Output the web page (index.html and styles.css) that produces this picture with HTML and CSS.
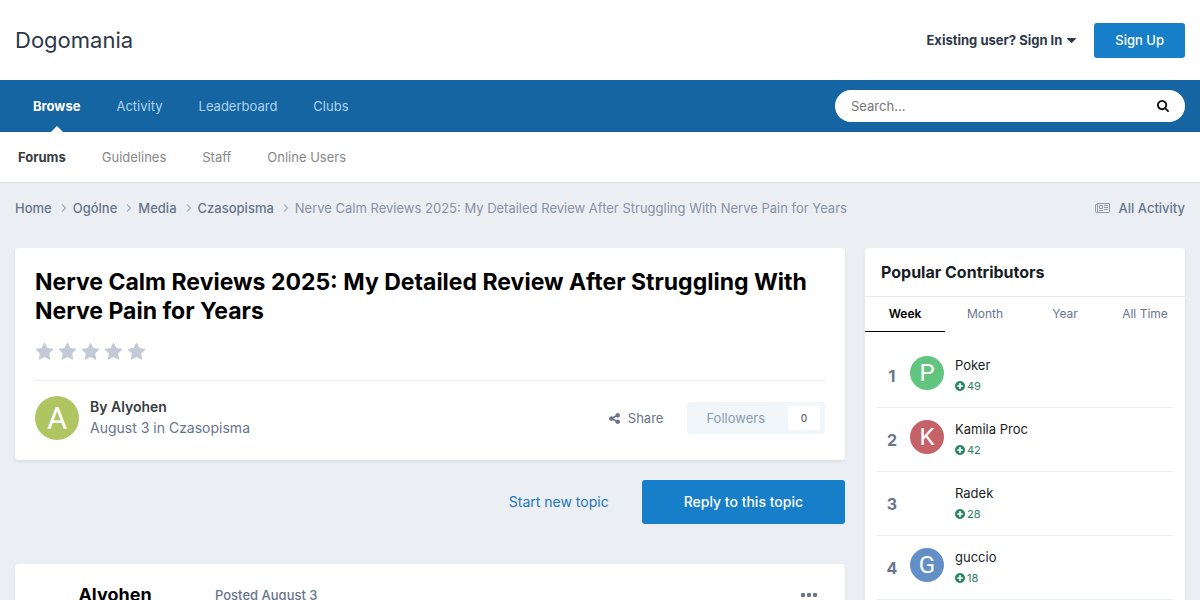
FILE: index.html
```html
<!DOCTYPE html>
<html lang="en">
<head>
    <meta charset="UTF-8">
    <meta name="viewport" content="width=device-width, initial-scale=1.0">
    <title>Nerve Calm Reviews 2025 - Dogomania</title>
    <link rel="stylesheet" href="styles.css">
</head>
<body>
    <!-- Shared icons -->
    <svg class="sprite" aria-hidden="true">
        <symbol id="star" viewBox="0 0 1792 1792"><path d="M1728 647q0 22-26 48l-363 354 86 500q1 7 1 20 0 21-10.5 35.5t-30.5 14.5q-19 0-40-12l-449-236-449 236q-22 12-40 12-21 0-31.5-14.5t-10.5-35.5q0-6 2-20l86-500-364-354q-25-27-25-48 0-37 56-46l502-73 225-455q19-41 49-41t49 41l225 455 502 73q56 9 56 46z"/></symbol>
        <symbol id="plus" viewBox="128 128 1536 1536"><path d="M1344 960v-128q0-26-19-45t-45-19h-256v-256q0-26-19-45t-45-19h-128q-26 0-45 19t-19 45v256h-256q-26 0-45 19t-19 45v128q0 26 19 45t45 19h256v256q0 26 19 45t45 19h128q26 0 45-19t19-45v-256h256q26 0 45-19t19-45zm320-64q0 209-103 385.5t-279.5 279.5-385.5 103-385.5-103-279.5-279.5-103-385.5 103-385.5 279.5-279.5 385.5-103 385.5 103 279.5 279.5 103 385.5z"/></symbol>
        <symbol id="angle" viewBox="0 0 6 8"><path d="M1 0.5 L4.5 4 L1 7.5" fill="none" stroke="currentColor" stroke-width="1.3"/></symbol>
    </svg>

    <header class="header">
        <a class="logo" href="#">Dogomania</a>
        <div class="user-links">
            <a class="sign-in" href="#">Existing user? Sign In
                <svg class="caret" viewBox="384 640 1024 576"><path d="M1408 704q0 26-19 45l-448 448q-19 19-45 19t-45-19l-448-448q-19-19-19-45t19-45 45-19h896q26 0 45 19t19 45z"/></svg>
            </a>
            <a class="sign-up" href="#">Sign Up</a>
        </div>
    </header>

    <nav class="main-nav">
        <ul class="nav-list">
            <li class="active"><a href="#">Browse</a></li>
            <li><a href="#">Activity</a></li>
            <li><a href="#">Leaderboard</a></li>
            <li><a href="#">Clubs</a></li>
        </ul>
        <form class="search">
            <input type="search" placeholder="Search..." aria-label="Search">
            <button type="button" aria-label="Search">
                <svg viewBox="64 128 1664 1664"><path d="M1216 832q0-185-131.5-316.5t-316.5-131.5-316.5 131.5-131.5 316.5 131.5 316.5 316.5 131.5 316.5-131.5 131.5-316.5zm512 832q0 52-38 90t-90 38q-54 0-90-38l-343-342q-179 124-399 124-143 0-273.5-55.5t-225-150-150-225-55.5-273.5 55.5-273.5 150-225 225-150 273.5-55.5 273.5 55.5 225 150 150 225 55.5 273.5q0 220-124 399l343 343q37 37 37 90z"/></svg>
            </button>
        </form>
    </nav>

    <nav class="sub-nav">
        <ul class="nav-list">
            <li class="active"><a href="#">Forums</a></li>
            <li><a href="#">Guidelines</a></li>
            <li><a href="#">Staff</a></li>
            <li><a href="#">Online Users</a></li>
        </ul>
    </nav>

    <nav class="breadcrumb">
        <ul>
            <li><a href="#">Home</a><svg><use href="#angle"/></svg></li>
            <li><a href="#">Ogólne</a><svg><use href="#angle"/></svg></li>
            <li><a href="#">Media</a><svg><use href="#angle"/></svg></li>
            <li><a href="#">Czasopisma</a><svg><use href="#angle"/></svg></li>
            <li class="current">Nerve Calm Reviews 2025: My Detailed Review After Struggling With Nerve Pain for Years</li>
        </ul>
        <a class="all-activity" href="#">
            <svg viewBox="0 0 15 10"><g fill="none" stroke="currentColor"><path d="M2.5 0.5H14.5V8.5Q14.5 9.5 13.5 9.5H1.5Q0.5 9.5 0.5 8.5V1.5H2.5"/><path d="M2.5 0.5V8.5Q2.5 9.5 1.5 9.5"/><path d="M4.5 2.5H7.5V5.5H4.5Z M9 2.5H13 M9 4.5H13 M9 6.5H13 M4 7.5H8"/></g></svg>
            All Activity
        </a>
    </nav>

    <div class="layout">
        <main>
            <section class="box topic">
                <h1>Nerve Calm Reviews 2025: My Detailed Review After Struggling With Nerve Pain for Years</h1>
                <div class="stars">
                    <svg><use href="#star"/></svg>
                    <svg><use href="#star"/></svg>
                    <svg><use href="#star"/></svg>
                    <svg><use href="#star"/></svg>
                    <svg><use href="#star"/></svg>
                </div>
                <div class="topic-info">
                    <span class="avatar avatar-large green">A</span>
                    <div class="author">
                        <strong>By <a href="#">Alyohen</a></strong>
                        <p>August 3 in <a href="#">Czasopisma</a></p>
                    </div>
                    <a class="share" href="#">
                        <svg viewBox="128 128 1536 1536"><path d="M1344 1024q133 0 226.5 93.5t93.5 226.5-93.5 226.5-226.5 93.5-226.5-93.5-93.5-226.5q0-12 2-34l-360-180q-92 86-218 86-133 0-226.5-93.5t-93.5-226.5 93.5-226.5 226.5-93.5q126 0 218 86l360-180q-2-22-2-34 0-133 93.5-226.5t226.5-93.5 226.5 93.5 93.5 226.5-93.5 226.5-226.5 93.5q-126 0-218-86l-360 180q2 22 2 34t-2 34l360 180q92-86 218-86z"/></svg>
                        Share
                    </a>
                    <a class="followers" href="#">Followers <span>0</span></a>
                </div>
            </section>

            <div class="actions">
                <a class="start-topic" href="#">Start new topic</a>
                <a class="reply" href="#">Reply to this topic</a>
            </div>

            <article class="box post">
                <h3><a href="#">Alyohen</a></h3>
                <a class="posted" href="#">Posted August 3</a>
                <button type="button" aria-label="More options">
                    <svg viewBox="0 0 16 4"><rect width="4" height="4" rx="1"/><rect x="6" width="4" height="4" rx="1"/><rect x="12" width="4" height="4" rx="1"/></svg>
                </button>
            </article>
        </main>

        <aside class="box">
            <h2>Popular Contributors</h2>
            <div class="tabs">
                <a class="active" href="#">Week</a>
                <a href="#">Month</a>
                <a href="#">Year</a>
                <a href="#">All Time</a>
            </div>
            <ol class="contributors">
                <li>
                    <span class="rank">1</span>
                    <span class="avatar mint">P</span>
                    <div><a href="#">Poker</a><p><svg><use href="#plus"/></svg>49</p></div>
                </li>
                <li>
                    <span class="rank">2</span>
                    <span class="avatar red">K</span>
                    <div><a href="#">Kamila Proc</a><p><svg><use href="#plus"/></svg>42</p></div>
                </li>
                <li>
                    <span class="rank">3</span>
                    <span class="avatar"></span>
                    <div><a href="#">Radek</a><p><svg><use href="#plus"/></svg>28</p></div>
                </li>
                <li>
                    <span class="rank">4</span>
                    <span class="avatar blue">G</span>
                    <div><a href="#">guccio</a><p><svg><use href="#plus"/></svg>18</p></div>
                </li>
            </ol>
        </aside>
    </div>
</body>
</html>
```

FILE: styles.css
```css
* {
    box-sizing: border-box;
}
body {
    font-family: Inter, "Liberation Sans", sans-serif;
    font-size: 13px;
    line-height: 18px;
    color: #353c41;
    background-color: #ebeff4;
    margin: 0;
}
a {
    color: inherit;
    text-decoration: none;
}
ul, ol, p, h1, h2, h3 {
    margin: 0;
    padding: 0;
    list-style: none;
}
svg {
    fill: currentColor;
    flex: none;
}
.sprite {
    display: none;
}

/* Header */
.header {
    display: flex;
    justify-content: space-between;
    align-items: center;
    height: 80px;
    padding: 0 15px;
    background: #fff;
    color: #2d3748;
}
.logo {
    font-size: 22px;
    line-height: 32px;
}
.user-links {
    display: flex;
    align-items: center;
    gap: 18px;
}
.sign-in {
    display: flex;
    align-items: center;
    gap: 5px;
    font-weight: 700;
}
.caret {
    width: 9px;
    height: 5px;
}
.sign-up {
    padding: 0 21px;
    line-height: 35px;
    font-weight: 500;
    color: #fff;
    background: #177ec9;
    border-radius: 3px;
}

/* Navigation */
.nav-list {
    display: flex;
}
.nav-list a {
    display: block;
    padding: 0 18px;
}
.nav-list .active a {
    font-weight: 700;
}
.main-nav {
    display: flex;
    justify-content: space-between;
    align-items: center;
    padding: 0 15px;
    background: #1465a1;
    color: #b1d3ee;
}
.main-nav .nav-list a {
    line-height: 52px;
}
.main-nav .active {
    position: relative;
    color: #fff;
}
.main-nav .active::after {
    content: "";
    position: absolute;
    bottom: 0;
    left: 50%;
    margin-left: -6px;
    border: 6px solid transparent;
    border-top: 0;
    border-bottom-color: #fff;
}
.search {
    display: flex;
    align-items: center;
    width: 350px;
    height: 32px;
    padding: 0 16px;
    background: #fff;
    border-radius: 16px;
}
.search input {
    flex: 1;
    min-width: 0;
    padding: 0;
    border: 0;
    outline: 0;
    background: none;
    font: inherit;
}
.search input::placeholder {
    color: #757575;
}
.search button {
    display: flex;
    padding: 0;
    border: 0;
    background: none;
    color: #111;
}
.search svg {
    width: 12px;
    height: 12px;
}
.sub-nav {
    background: #fff;
    color: #888;
    border-bottom: 1px solid #d9dde4;
}
.sub-nav .nav-list a {
    line-height: 50px;
}
.sub-nav .active {
    color: #353c41;
}

/* Breadcrumb */
.breadcrumb {
    display: flex;
    justify-content: space-between;
    padding: 16px 15px 31px;
    font-weight: 500;
    color: #68758d;
}
.breadcrumb ul {
    display: flex;
}
.breadcrumb li {
    display: flex;
    align-items: center;
}
.breadcrumb li svg {
    width: 6px;
    height: 8px;
    margin: 0 6px 0 9px;
    color: #a9b2c1;
}
.breadcrumb .current {
    font-weight: 400;
    color: #8892a4;
}
.all-activity {
    display: flex;
    align-items: center;
    gap: 9px;
}
.all-activity svg {
    width: 15px;
    height: 10px;
    color: #8f99ab;
}

/* Columns */
.layout {
    display: grid;
    grid-template-columns: minmax(0, 1fr) 320px;
    gap: 20px;
    padding: 0 15px;
    align-items: start;
}
.box {
    background: #fff;
    border-radius: 4px;
    box-shadow: 0 2px 4px -1px rgba(0, 0, 0, 0.1);
}

/* Topic header */
.topic {
    padding: 20px;
}
.topic h1 {
    font-size: 23px;
    line-height: 29px;
    font-weight: 700;
    color: #000;
}
.stars {
    display: flex;
    gap: 4px;
    padding: 16px 0 18px;
    border-bottom: 1px solid #ebedf0;
    color: #c3cad6;
}
.stars svg {
    width: 19px;
    height: 20px;
}
.topic-info {
    display: flex;
    align-items: center;
    padding-top: 15px;
}
.avatar {
    width: 34px;
    height: 34px;
    flex: none;
    border-radius: 50%;
    font-family: Roboto, sans-serif;
    font-size: 24px;
    line-height: 34px;
    text-align: center;
    color: #fff;
}
.avatar-large {
    width: 44px;
    height: 44px;
    font-size: 31px;
    line-height: 46px;
}
.green {
    background: #afc562;
}
.mint {
    background: #62c57f;
}
.red {
    background: #c56268;
}
.blue {
    background: #628fc5;
}
.author {
    flex: 1;
    margin-left: 11px;
    padding-bottom: 2px;
    font-size: 14px;
    line-height: 21px;
}
.author strong {
    font-weight: 600;
}
.author p {
    color: #68758d;
}
.share {
    display: flex;
    align-items: center;
    gap: 8px;
    margin-right: 24px;
    color: #68758d;
}
.share svg {
    width: 11px;
    height: 11px;
}
.followers {
    display: flex;
    align-items: center;
    gap: 23px;
    padding: 4px 5px 4px 19px;
    background: #f1f6fa;
    border-radius: 3px;
    color: #8a9bb0;
}
.followers span {
    width: 32px;
    font-size: 10px;
    font-weight: 500;
    line-height: 24px;
    text-align: center;
    background: #fff;
    border-radius: 3px;
    color: #666;
}

/* Topic buttons */
.actions {
    display: flex;
    justify-content: flex-end;
    gap: 33px;
    margin: 20px 0 40px;
    font-size: 14px;
    line-height: 44px;
}
.start-topic {
    color: #1d77b9;
}
.reply {
    padding: 0 42px;
    font-weight: 500;
    color: #fff;
    background: #177ec9;
    border-radius: 3px;
}

/* Post */
.post {
    display: grid;
    grid-template-columns: 200px 1fr auto;
    align-items: center;
    padding: 20px 28px 20px 0;
    color: #68758d;
}
.post h3 {
    font-size: 18px;
    line-height: 22px;
    font-weight: 700;
    text-align: center;
    color: #000;
}
.posted {
    font-weight: 500;
}
.post button {
    display: flex;
    padding: 0;
    border: 0;
    background: none;
    color: #68758d;
}
.post button svg {
    width: 16px;
    height: 4px;
}

/* Sidebar */
aside h2 {
    padding: 15px 16px;
    font-size: 16px;
    line-height: 18px;
    font-weight: 700;
    color: #171d25;
    border-bottom: 1px solid #e5e7eb;
}
.tabs {
    display: grid;
    grid-template-columns: repeat(4, 1fr);
    font-size: 12px;
    line-height: 34px;
    text-align: center;
    color: #68758d;
}
.tabs a {
    border-bottom: 1px solid transparent;
}
.tabs .active {
    font-weight: 600;
    color: #000;
    border-bottom-color: #000;
}
.contributors {
    padding: 12px;
}
.contributors li {
    display: flex;
    height: 64px;
    padding-top: 12px;
    border-bottom: 1px solid #ebedf0;
}
.rank {
    width: 30px;
    margin-right: 3px;
    font-size: 16px;
    line-height: 40px;
    font-weight: 700;
    text-align: center;
    color: #68758d;
}
.contributors div {
    margin-left: 11px;
    line-height: 19px;
    color: #171d25;
}
.contributors p {
    display: flex;
    align-items: center;
    gap: 2px;
    font-size: 11px;
    line-height: 22px;
    color: #2b8260;
}
.contributors svg {
    width: 10px;
    height: 10px;
}
```
